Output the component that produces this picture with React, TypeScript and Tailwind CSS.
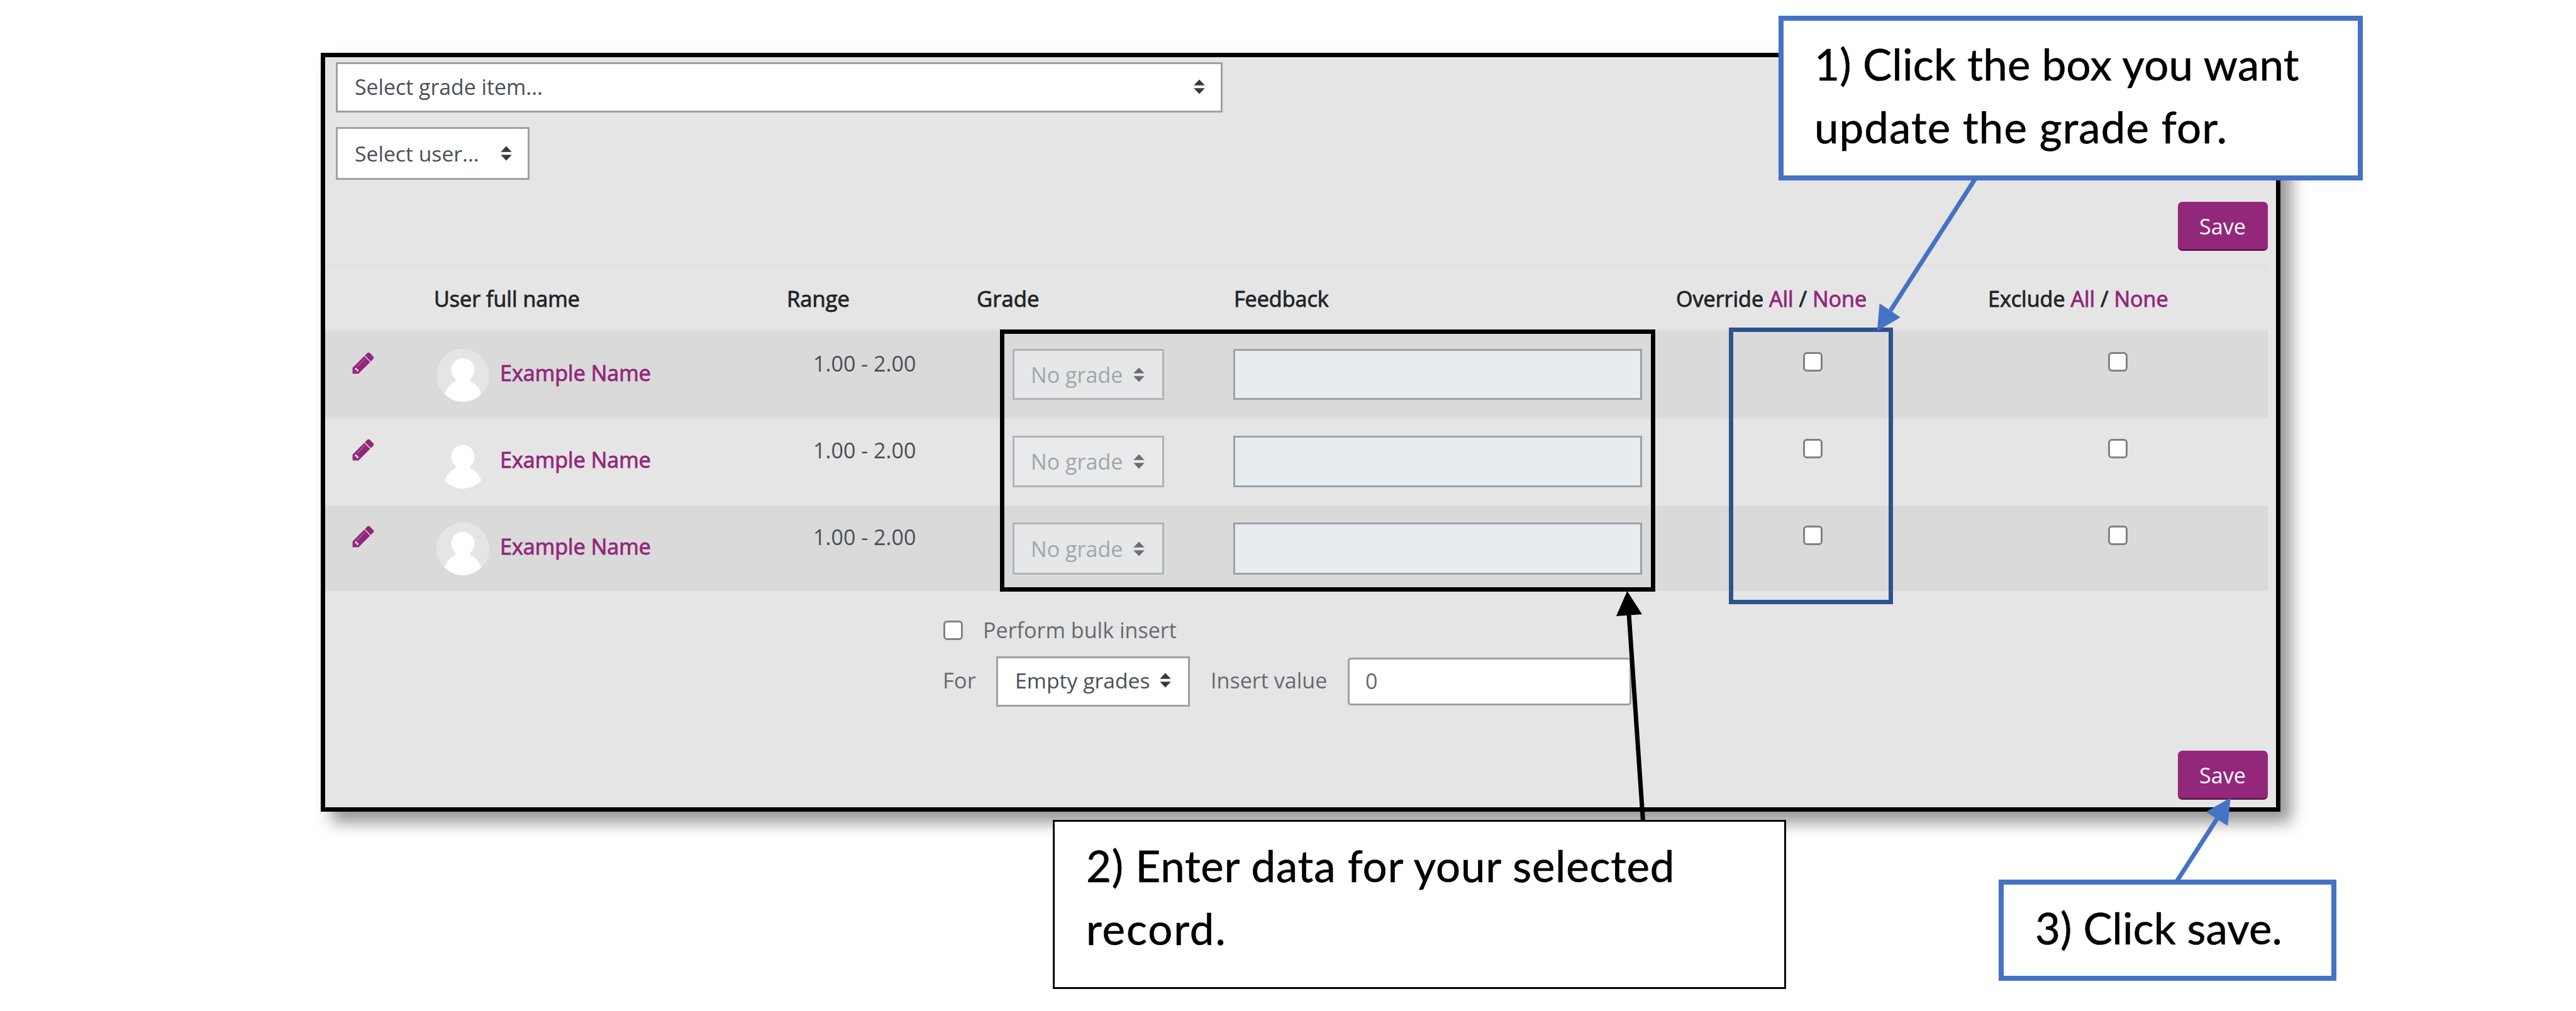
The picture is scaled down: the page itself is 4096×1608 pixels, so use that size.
import React from "react";

function Caret({ className = "fill-[#343a40]" }: { className?: string }) {
  return (
    <svg viewBox="0 0 18 24" className={`h-[24px] w-[18px] shrink-0 ${className}`}>
      <path d="M9 0.5L17.8 9.8H0.2z" />
      <path d="M9 23.5L0.2 14.2H17.8z" />
    </svg>
  );
}

function Pencil() {
  return (
    <svg
      viewBox="128 149 1515 1515"
      className="mt-[6px] ml-[44px] h-[33px] w-[33px] overflow-visible fill-[#93277a] stroke-[#93277a]"
      strokeWidth="36"
    >
      <path d="M491 1536l91-91-235-235-91 91v107h128v128h107zm523-928q0-22-22-22-10 0-17 7l-542 542q-7 7-7 17 0 22 22 22 10 0 17-7l542-542q7-7 7-17zm-54-192l416 416-832 832h-416v-416l832-832zm683 96q0 53-37 90l-166 166-416-416 166-165q36-38 90-38 53 0 91 38l235 234q37 39 37 91z" />
    </svg>
  );
}

function Avatar() {
  return (
    <svg viewBox="0 0 84 84" className="h-[84px] w-[84px] shrink-0">
      <circle cx="42" cy="42" r="42" fill="#e5e5e5" />
      <circle cx="42" cy="33.4" r="18.6" fill="#fff" />
      <path
        fill="#fff"
        d="M30 48.500H54V52C62 55.500 68.500 62 71 71.500C63.500 79.500 53 84 42 84C31 84 20.500 79.500 13.200 71.500C15.800 62 22 55.500 30 52Z"
      />
    </svg>
  );
}

function Check({ className = "" }: { className?: string }) {
  return (
    <span
      className={`block h-[31px] w-[31px] shrink-0 rounded-[6px] border-[3px] border-[#828282] bg-white ${className}`}
    />
  );
}

function SaveButton() {
  return (
    <button className="flex h-[78px] w-[143px] items-center justify-center rounded-[7px] border-b-[3px] border-[#641a53] bg-[#93277a] pt-[2px] pr-[1px] text-[34.200px] text-white">
      Save
    </button>
  );
}

function AllNone() {
  return (
    <>
      <span className="text-[#93277a]">All</span> / <span className="text-[#93277a]">None</span>
    </>
  );
}

const rows = [
  { row: "h-[138px] bg-[#dadada] pt-[28px]", select: "h-[81px] bg-[#e5e7e9]", input: "h-[81px]" },
  {
    row: "h-[139px] border-y-[3px] border-[#e1e4e6] bg-[#e5e5e5] pt-[25px]",
    select: "h-[82px] bg-[#e8eaec]",
    input: "h-[82px]",
  },
  { row: "h-[136px] bg-[#dadada] pt-[27px]", select: "h-[83px] bg-[#e5e7e9]", input: "h-[83px]" },
];

const cols = "grid grid-cols-[171px_561px_302px_409px_703px_496px_447px]";

export default function App() {
  return (
    <div className="relative h-[1608px] w-[4096px] overflow-hidden bg-white pt-[84px] pl-[510px] font-['Open_Sans',sans-serif] text-[34.100px] leading-[46px] whitespace-nowrap text-[#495057]">
      <main className="flex h-[1207px] w-[3116px] flex-col border-[7px] border-black bg-[#e5e5e5] pt-[8px] shadow-[17px_17px_24px_rgba(0,0,0,0.42)]">
        <div className="ml-[17px] flex h-[80px] w-[1410px] shrink-0 items-center justify-between border-[3px] border-[#9ca1a8] bg-white pr-[25px] pb-[3px] pl-[27px] text-[33.800px]">
          <span>Select grade item...</span>
          <Caret />
        </div>
        <div className="mt-[23px] ml-[17px] flex h-[84px] w-[308px] shrink-0 items-center justify-between border-[3px] border-[#9ca1a8] bg-white pr-[25px] pl-[27px] text-[33.700px]">
          <span>Select user...</span>
          <Caret />
        </div>
        <div className="mt-[35px] flex shrink-0 justify-end pr-[13px]">
          <SaveButton />
        </div>

        <section className="mt-[22px] w-[3089px] shrink-0">
          <div
            className={`${cols} h-[106px] border-y-[3px] border-[#dce0e3] pt-[28px] text-[#212529] [-webkit-text-stroke:0.9px] *:pl-[2px]`}
          >
            <span />
            <span>User full name</span>
            <span className="text-[34.600px]">Range</span>
            <span className="text-[34.700px]">Grade</span>
            <span>Feedback</span>
            <span>
              Override <AllNone />
            </span>
            <span>
              Exclude <AllNone />
            </span>
          </div>
          {rows.map((r, i) => (
            <div key={i} className={`${cols} items-start ${r.row}`}>
              <Pencil />
              <div className="flex items-start gap-[17px] pl-[6px]">
                <Avatar />
                <span className="mt-[15px] text-[#93277a] [-webkit-text-stroke:0.9px]">Example Name</span>
              </div>
              <span className="pl-[44px]">1.00 - 2.00</span>
              <div
                className={`ml-[59px] flex w-[241px] items-center justify-between border-[3px] border-[#b0b4b9] pr-[28px] pl-[26px] text-[#a1a6aa] ${r.select}`}
              >
                <span>No grade</span>
                <Caret className="fill-[#6b6f73]" />
              </div>
              <div className={`ml-[1px] w-[650px] border-[3px] border-[#9ca1a8] bg-[#e8ecef] ${r.input}`} />
              <Check className="mt-[5px] ml-[204px]" />
              <Check className="mt-[5px] ml-[193px]" />
            </div>
          ))}
        </section>

        <div className="mt-[39px] ml-[983px] flex shrink-0 items-center text-[#666b71]">
          <Check />
          <span className="ml-[32px]">Perform bulk insert</span>
        </div>
        <div className="mt-[19px] ml-[980px] flex h-[79px] shrink-0 items-center text-[#666b71]">
          <span className="w-[87px] pb-[3px] pl-[2px] text-[34.600px]">For</span>
          <div className="flex h-[80px] w-[308px] items-center justify-between border-[3px] border-[#9ca1a8] bg-white pr-[27px] pb-[3px] pl-[27px] text-[33.700px] text-[#495057]">
            <span>Empty grades</span>
            <Caret />
          </div>
          <span className="ml-[33px] w-[218px] pb-[3px]">Insert value</span>
          <div className="flex h-[76px] w-[451px] items-center rounded-[5px] border-[3px] border-[#9ca1a8] bg-white pb-[1px] pl-[25px]">
            0
          </div>
        </div>
        <div className="mt-[71px] flex shrink-0 justify-end pr-[13px]">
          <SaveButton />
        </div>
      </main>

      {/* Highlight frames */}
      <div className="absolute top-[524px] left-[1590px] h-[417px] w-[1042px] border-[7px] border-black" />
      <div className="absolute top-[521px] left-[2749px] h-[440px] w-[261px] border-[7px] border-[#2f528f]" />

      {/* Arrows */}
      <svg viewBox="0 0 4096 1608" className="absolute top-0 left-0 h-[1608px] w-[4096px]">
        <g stroke="#4472c4" fill="#4472c4">
          <path d="M3141 284L3006 494" strokeWidth="7" />
          <path d="M2984.800 526.600L2988.600 482.500L3021.700 504.700Z" stroke="none" />
          <path d="M3461 1402L3526 1301" strokeWidth="7" />
          <path d="M3546.800 1268.500L3507.600 1291.300L3542.200 1313.400Z" stroke="none" />
        </g>
        <path d="M2612.500 1306L2590 976" stroke="#000" strokeWidth="7" />
        <path d="M2587.300 940L2569.900 979.900L2611 977Z" />
      </svg>

      {/* Callouts */}
      <div className="absolute top-[25px] left-[2828px] h-[262px] w-[929px] border-[8px] border-[#4472c4] bg-white pt-[19px] pl-[49px] font-['Lato',sans-serif] text-[69px] leading-[99.500px] text-black [-webkit-text-stroke:0.6px]">
        <div className="tracking-[0.280px]">1) Click the box you want</div>
        <div className="tracking-[1.100px]">update the grade for.</div>
      </div>
      <div className="absolute top-[1304px] left-[1674px] h-[269px] w-[1166px] border-[3px] border-black bg-white pt-[20px] pl-[50px] font-['Lato',sans-serif] text-[69px] leading-[99.500px] text-black [-webkit-text-stroke:0.6px]">
        <div className="tracking-[0.800px]">2) Enter data for your selected</div>
        <div className="tracking-[1.900px]">record.</div>
      </div>
      <div className="absolute top-[1399px] left-[3178px] h-[161px] w-[537px] border-[8px] border-[#4472c4] bg-white pt-[19px] pl-[50px] font-['Lato',sans-serif] text-[69px] leading-[99.500px] text-black [-webkit-text-stroke:0.6px]">
        <div className="tracking-[0.100px]">3) Click save.</div>
      </div>
    </div>
  );
}
